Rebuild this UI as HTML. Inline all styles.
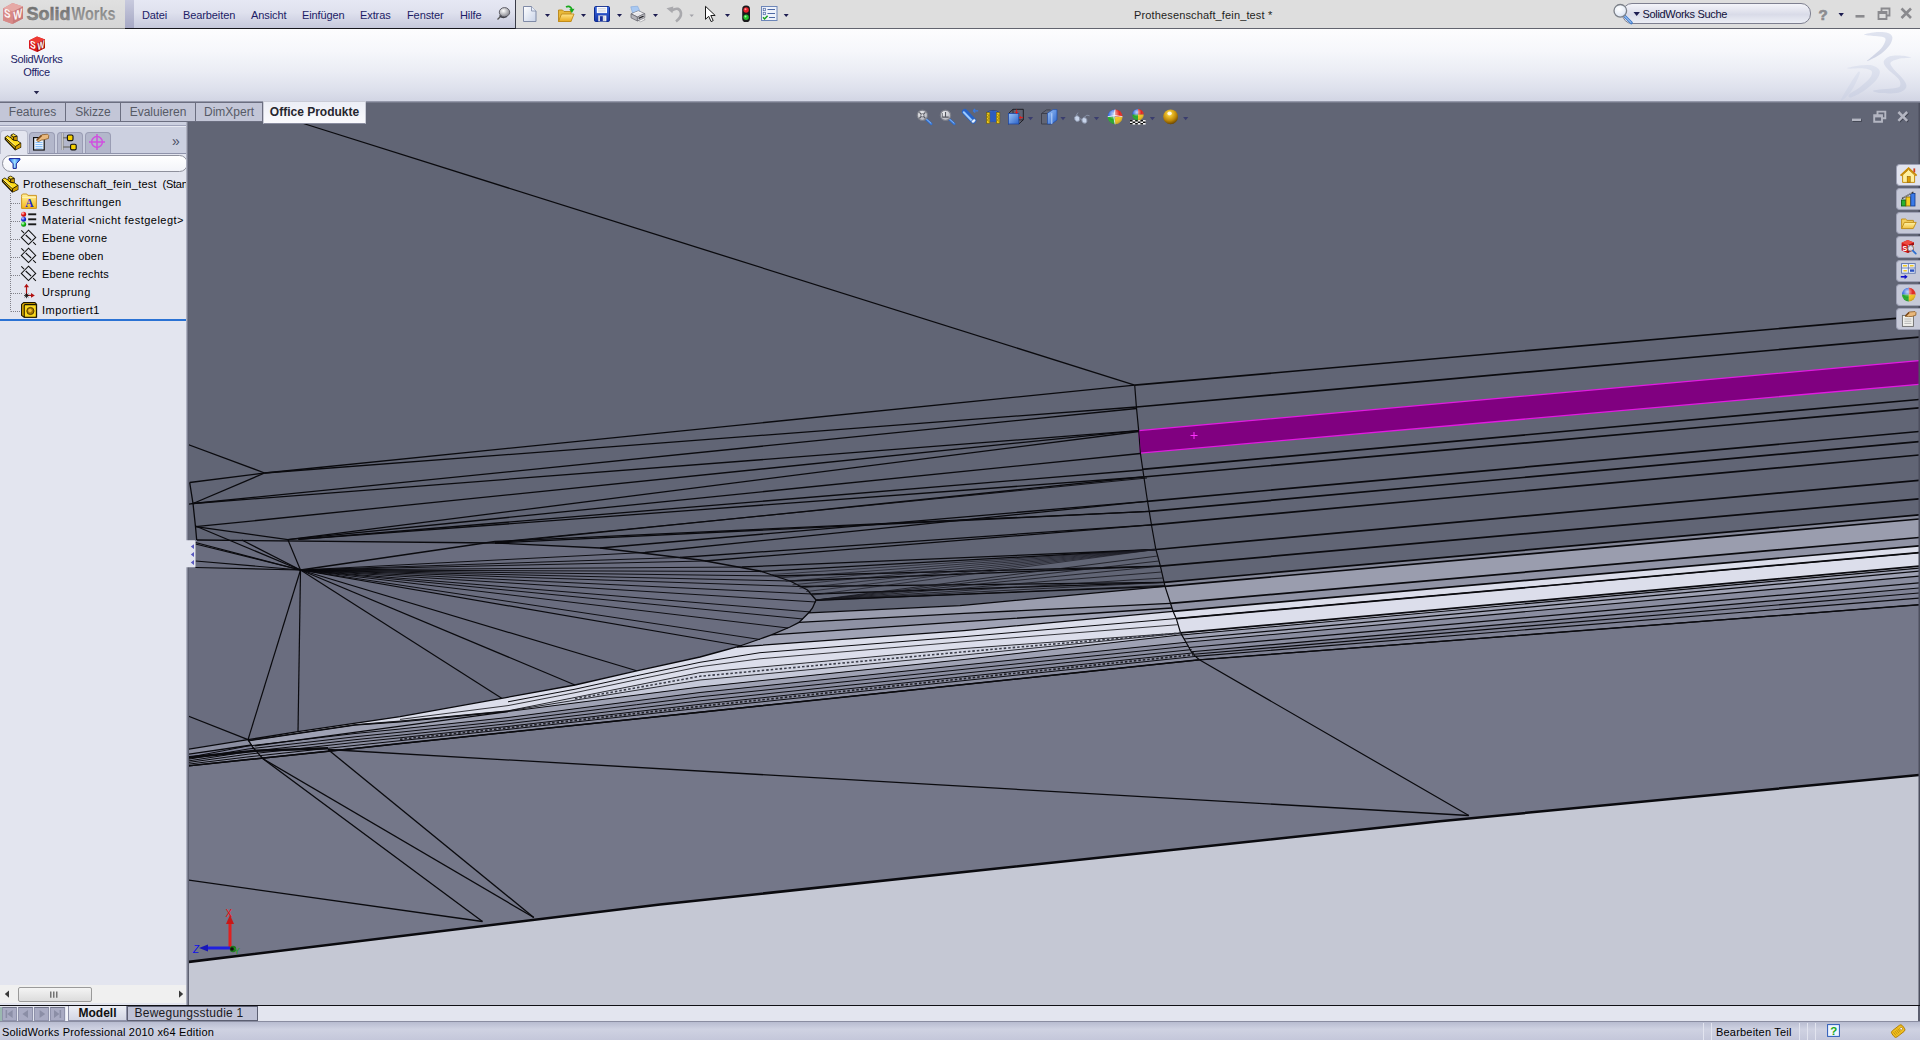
<!DOCTYPE html><html><head><meta charset="utf-8"><title>SolidWorks</title><style>
*{box-sizing:border-box;margin:0;padding:0}
html,body{width:1920px;height:1040px;overflow:hidden;background:#e3e5ef;font-family:"Liberation Sans",sans-serif;font-size:11px;color:#1b1b5e}
.abs{position:absolute}
#title{left:0;top:0;width:1920px;height:28px;background:#dedede}
#titleline{left:0;top:28px;width:1920px;height:1px;background:#62646f}
#logo{left:0;top:0;width:125px;height:28px;background:linear-gradient(#e0e0e0,#d6d6d6)}
#logoline{left:0;top:28px;width:125px;height:1px;background:#808080}
#menu{left:125px;top:0;width:391px;height:29px;background:linear-gradient(#e6e8f4 0%,#dfe1ee 45%,#c6c9dc 100%);border-bottom:1px solid #16161c;border-right:1px solid #3a3c48}
#menu .stripe{left:0;top:0;width:9px;height:28px;background:linear-gradient(#c8cade,#a6a8c4)}
.mi{position:absolute;top:9px;font-size:11px;color:#1c1c66;white-space:nowrap;letter-spacing:-0.1px}
#cmd{left:0;top:29px;width:1920px;height:73px;background:linear-gradient(#fdfdfe 0%,#f6f7fb 30%,#eaecf4 60%,#dcdfeb 85%,#d1d4e3 100%)}
#cmdline{left:0;top:101px;width:1920px;height:2px;background:linear-gradient(#a4a7ba,#666a7b)}
.tab{position:absolute;top:102px;height:20px;background:#c3c6d7;border:1px solid #6b6e80;border-left:none;font-size:12px;color:#565a66;text-align:center;line-height:18px;font-family:"Liberation Sans",sans-serif}
#tabact{left:263px;top:101px;width:103px;height:23px;background:linear-gradient(#eceef6,#fafafd);border:1px solid #c9cbd6;border-bottom:1px solid #8a8da0;font-weight:bold;color:#26262e;font-size:12px;line-height:20px;text-align:center;position:absolute}
#panel{left:0;top:122px;width:186px;height:883px;background:#e3e5ef}
#panelhead{left:0;top:122px;width:186px;height:33px;background:#ccd0e0}
#pvline{left:186px;top:122px;width:3px;height:884px;background:linear-gradient(90deg,#c9ccda 0%,#8a8d9e 40%,#5c5f70 85%)}
.ptab{position:absolute;top:132px;height:21px;width:26px;background:#b3b7cb;border:1px solid #9a9db4;border-bottom:none;border-radius:4px 4px 0 0}
#filter{left:2px;top:155px;width:186px;height:17px;border:1px solid #8e909c;border-radius:9px;background:linear-gradient(#ffffff,#f3f4f9)}
.tr{position:absolute;left:42px;font-size:11px;color:#000;white-space:nowrap;font-family:"Liberation Sans",sans-serif;letter-spacing:0.15px}
#blue{left:0;top:319px;width:186px;height:2px;background:#2a72d4}
#hscroll{left:0;top:985px;width:186px;height:18px;background:#f0f0f0}
#thumb{left:18px;top:987px;width:74px;height:15px;border:1px solid #9a9a9a;border-radius:2px;background:linear-gradient(#f4f4f4,#dcdcdc)}
#vbottom{left:0;top:1005px;width:1920px;height:1px;background:#101014}
#btabs{left:0;top:1006px;width:1920px;height:16px;background:#e3e5ef}
#status{left:0;top:1022px;width:1920px;height:18px;background:linear-gradient(#b8bcd0,#cfd2e2 40%,#c4c7da)}
#status .t{position:absolute;top:4px;font-size:11px;color:#000;white-space:nowrap;font-family:"Liberation Sans",sans-serif;letter-spacing:0.2px}
#search{left:1622px;top:3px;width:189px;height:21px;border:1px solid #7e8090;border-radius:10px;background:linear-gradient(#f4f5fa,#d9dbe8 55%,#eceef5)}
.rt{position:absolute;left:1896px;width:24px;height:23px;background:#c6c9d8;border:1px solid #9da0b4;border-right:none;border-radius:4px 0 0 4px}
</style></head><body>
<svg class="abs" style="left:0;top:0" width="1920" height="1040" viewBox="0 0 1920 1040"><defs><clipPath id="vp"><rect x="189" y="103" width="1730" height="902"/></clipPath></defs><rect x="186" y="101" width="1734" height="905" fill="#616575"/><g clip-path="url(#vp)">
<polygon points="188.0,962.0 660.0,904.5 1148.0,852.5 1440.0,821.2 1920.0,774.9 1920.0,1006.0 188.0,1006.0" fill="#c5c8d4"/>
<polygon points="188.0,765.9 1199.4,659.8 1920.0,604.7 1920.0,774.9 1440.0,821.2 1148.0,852.5 660.0,904.5 188.0,962.0" fill="#747789"/>
<polygon points="188.0,540.0 197.0,540.0 495.0,543.0 600.0,548.0 700.0,560.0 760.0,571.0 790.0,581.0 807.5,590.0 816.0,600.0 812.5,608.0 808.7,612.8 799.0,622.4 790.0,627.0 771.5,634.8 760.0,639.0 737.0,647.0 720.0,651.5 700.0,657.0 636.7,670.8 575.0,685.0 501.7,698.3 400.0,716.7 298.0,731.7 248.0,739.7 188.0,716.0" fill="#6a6d7f"/>
<polygon points="188.0,716.0 248.0,739.7 188.0,749.2" fill="#6a6d7f"/>
<polygon points="1164.0,582.4 1920.0,514.8 1920.0,518.9 1165.0,586.4" fill="#858899"/>
<polygon points="1165.0,586.4 1920.0,518.9 1920.0,537.4 1170.5,603.3" fill="#9a9dae"/>
<polygon points="1170.5,603.3 1920.0,537.4 1920.0,545.8 1173.0,611.3" fill="#9093a5"/>
<polygon points="808.7,612.8 960.0,605.6 1165.0,586.4 1170.5,603.3 964.0,613.4 799.0,622.4" fill="#9a9dae"/>
<polygon points="799.0,622.4 964.0,613.4 1170.5,603.3 1172.0,608.0 964.0,621.7 771.5,634.8 790.0,627.0" fill="#8e91a3"/>
<polygon points="771.5,634.8 964.0,621.7 1172.0,608.0 1173.0,611.3 964.0,630.6 737.0,647.0 760.0,639.0" fill="#a0a3b5"/>
<polygon points="248.0,739.7 298.0,731.7 400.0,716.7 501.7,698.3 575.0,685.0 636.7,670.8 700.0,657.0 720.0,651.5 737.0,647.0 964.0,630.6 1173.0,611.3 1920.0,545.8 1920.0,566.0 1180.6,632.9 964.0,648.5 700.0,672.6 508.0,710.8 400.0,721.0 355.0,724.6 248.0,740.3" fill="#dcdeeb"/>
<polygon points="248.0,740.3 355.0,724.6 400.0,721.0 508.0,710.8 700.0,672.6 964.0,648.5 1180.6,632.9 1920.0,566.0 1920.0,566.5 1180.8,633.3 964.0,655.0 700.0,680.0 508.0,711.0 400.0,721.4 355.0,724.9 248.0,740.6" fill="#d2d5e3"/>
<polygon points="248.0,740.6 355.0,724.9 400.0,721.4 508.0,711.0 700.0,680.0 964.0,655.0 1180.8,633.3 1920.0,566.5 1920.0,568.0 1181.5,634.8 964.0,659.5 700.0,687.0 508.0,711.5 400.0,722.0 355.0,725.2 248.0,741.0" fill="#c6c9d9"/>
<polygon points="248.0,741.0 355.0,725.2 400.0,722.0 508.0,711.5 700.0,687.0 964.0,659.5 1181.5,634.8 1920.0,568.0 1920.0,576.0 1186.0,642.3 964.0,665.0 700.0,692.5 508.0,717.5 400.0,729.0 355.0,733.5 248.0,746.0 188.0,757.5" fill="#9fa2b4"/>
<polygon points="188.0,757.5 248.0,746.0 355.0,733.5 400.0,729.0 508.0,717.5 700.0,692.5 964.0,665.0 1186.0,642.3 1920.0,576.0 1920.0,604.7 1199.4,659.8 964.0,684.5 700.0,712.2 508.0,732.3 400.0,743.6 355.0,748.4 248.0,759.6 188.0,765.9" fill="#8a8da0"/>
<polygon points="1191.3,651.7 1920.0,587.9 1920.0,604.7 1199.4,659.8" fill="#7f8295"/>
<polygon points="188.0,749.2 248.0,739.7 252.0,745.0 188.0,754.2" fill="#8c8fa2"/>
<polygon points="188.0,754.2 252.0,745.0 256.0,750.8 188.0,758.0" fill="#80839a"/>
<polygon points="1138.7,430.6 1920.0,360.6 1920.0,384.2 1140.4,453.1" fill="#800080" stroke="#e21be2" stroke-width="1.3"/>
<path d="M1190.5 435.5h7M1194 432v7" stroke="#ff30ff" stroke-width="1" fill="none"/>
<line x1="295.5" y1="121.0" x2="1134.7" y2="385.1" stroke="#0a0a0e" stroke-width="1.3"/>
<line x1="1134.7" y1="385.1" x2="1920.0" y2="316.2" stroke="#0a0a0e" stroke-width="1.7"/>
<line x1="1136.4" y1="407.0" x2="1920.0" y2="337.0" stroke="#0a0a0e" stroke-width="1.7"/>
<line x1="1142.0" y1="469.3" x2="1920.0" y2="399.4" stroke="#0a0a0e" stroke-width="1.7"/>
<line x1="1143.0" y1="477.0" x2="1920.0" y2="407.8" stroke="#0a0a0e" stroke-width="1.7"/>
<line x1="1147.0" y1="501.3" x2="1920.0" y2="431.4" stroke="#0a0a0e" stroke-width="1.7"/>
<line x1="1149.5" y1="511.4" x2="1920.0" y2="441.5" stroke="#0a0a0e" stroke-width="1.7"/>
<line x1="1151.5" y1="524.8" x2="1920.0" y2="454.9" stroke="#0a0a0e" stroke-width="1.7"/>
<line x1="1156.0" y1="549.5" x2="1920.0" y2="480.2" stroke="#0a0a0e" stroke-width="1.7"/>
<line x1="1160.4" y1="566.2" x2="1920.0" y2="498.7" stroke="#0a0a0e" stroke-width="1.7"/>
<line x1="1164.0" y1="582.4" x2="1920.0" y2="514.8" stroke="#0a0a0e" stroke-width="1.7"/>
<line x1="1165.0" y1="586.4" x2="1920.0" y2="518.9" stroke="#0a0a0e" stroke-width="1.7"/>
<line x1="1170.5" y1="603.3" x2="1920.0" y2="537.4" stroke="#0a0a0e" stroke-width="1.7"/>
<line x1="1173.0" y1="611.3" x2="1920.0" y2="545.8" stroke="#0a0a0e" stroke-width="1.7"/>
<line x1="1176.3" y1="618.7" x2="1920.0" y2="552.5" stroke="#0a0a0e" stroke-width="1.7"/>
<line x1="1180.6" y1="632.9" x2="1920.0" y2="566.0" stroke="#0a0a0e" stroke-width="1.7"/>
<line x1="1181.5" y1="635.0" x2="1920.0" y2="568.0" stroke="#0a0a0e" stroke-width="1.15"/>
<line x1="1184.0" y1="639.0" x2="1920.0" y2="571.0" stroke="#0a0a0e" stroke-width="1.15"/>
<line x1="1186.0" y1="642.3" x2="1920.0" y2="576.0" stroke="#0a0a0e" stroke-width="1.15"/>
<line x1="1189.0" y1="647.5" x2="1920.0" y2="582.8" stroke="#0a0a0e" stroke-width="1.15"/>
<line x1="1191.3" y1="651.7" x2="1920.0" y2="587.9" stroke="#0a0a0e" stroke-width="1.15"/>
<line x1="1193.5" y1="654.3" x2="1920.0" y2="592.9" stroke="#0a0a0e" stroke-width="1.15"/>
<line x1="1195.4" y1="656.4" x2="1920.0" y2="598.0" stroke="#0a0a0e" stroke-width="1.15"/>
<line x1="1199.4" y1="659.8" x2="1920.0" y2="604.7" stroke="#0a0a0e" stroke-width="1.15"/>
<polyline points="1134.7,385.1 1136.4,407.0 1138.7,430.6 1140.4,453.1 1143.0,471.0 1147.0,498.0 1152.0,528.0 1155.7,548.7 1160.4,566.2 1165.0,586.4 1170.5,603.3 1173.0,611.3 1176.3,618.7 1180.6,632.9 1186.0,642.3 1191.3,651.7 1195.4,656.4 1199.4,659.8 1468.8,815.5" fill="none" stroke="#0a0a0e" stroke-width="1.2"/>
<polyline points="188.0,962.0 660.0,904.5 1148.0,852.5 1440.0,821.2 1920.0,774.9" fill="none" stroke="#0a0a0e" stroke-width="2.5"/>
<line x1="188.0" y1="444.5" x2="264.7" y2="473.0" stroke="#0a0a0e" stroke-width="1.3"/>
<line x1="189.7" y1="482.5" x2="264.7" y2="473.0" stroke="#0a0a0e" stroke-width="1.3"/>
<line x1="193.0" y1="503.5" x2="264.7" y2="473.0" stroke="#0a0a0e" stroke-width="1.3"/>
<polyline points="189.7,482.5 193.0,503.5 195.5,526.7 196.7,540.0" fill="none" stroke="#0a0a0e" stroke-width="1.3"/>
<line x1="188.0" y1="504.3" x2="193.0" y2="503.5" stroke="#0a0a0e" stroke-width="1.3"/>
<line x1="264.7" y1="473.0" x2="1134.7" y2="385.1" stroke="#0a0a0e" stroke-width="1.3"/>
<line x1="264.7" y1="473.0" x2="1136.4" y2="407.0" stroke="#0a0a0e" stroke-width="1.3"/>
<line x1="193.0" y1="503.5" x2="1136.5" y2="408.5" stroke="#0a0a0e" stroke-width="1.3"/>
<line x1="193.0" y1="503.5" x2="1138.7" y2="430.6" stroke="#0a0a0e" stroke-width="1.3"/>
<line x1="195.5" y1="526.7" x2="1138.7" y2="430.6" stroke="#0a0a0e" stroke-width="1.3"/>
<line x1="195.5" y1="526.7" x2="288.0" y2="539.7" stroke="#0a0a0e" stroke-width="1.3"/>
<line x1="288.0" y1="539.7" x2="1138.7" y2="431.5" stroke="#0a0a0e" stroke-width="1.3"/>
<line x1="288.0" y1="539.7" x2="1140.4" y2="453.5" stroke="#0a0a0e" stroke-width="1.3"/>
<line x1="298.4" y1="539.4" x2="1142.0" y2="470.0" stroke="#0a0a0e" stroke-width="1.3"/>
<line x1="298.4" y1="539.4" x2="1143.0" y2="477.0" stroke="#0a0a0e" stroke-width="1.3"/>
<line x1="497.0" y1="542.0" x2="1147.0" y2="478.0" stroke="#0a0a0e" stroke-width="0.9"/>
<line x1="300.5" y1="570.0" x2="501.7" y2="698.3" stroke="#0a0a0e" stroke-width="1.2"/>
<line x1="300.5" y1="570.0" x2="575.0" y2="685.0" stroke="#0a0a0e" stroke-width="1.2"/>
<line x1="300.5" y1="570.0" x2="636.7" y2="670.8" stroke="#0a0a0e" stroke-width="1.2"/>
<line x1="300.5" y1="570.0" x2="742.0" y2="646.0" stroke="#0a0a0e" stroke-width="1.2"/>
<line x1="300.5" y1="570.0" x2="760.0" y2="639.5" stroke="#0a0a0e" stroke-width="0.95"/>
<line x1="300.5" y1="570.0" x2="788.0" y2="628.0" stroke="#0a0a0e" stroke-width="0.95"/>
<line x1="300.5" y1="570.0" x2="803.0" y2="619.0" stroke="#0a0a0e" stroke-width="0.95"/>
<line x1="300.5" y1="570.0" x2="811.0" y2="612.0" stroke="#0a0a0e" stroke-width="0.95"/>
<line x1="300.5" y1="570.0" x2="816.0" y2="602.0" stroke="#0a0a0e" stroke-width="0.95"/>
<line x1="300.5" y1="570.0" x2="812.0" y2="594.0" stroke="#0a0a0e" stroke-width="0.95"/>
<line x1="300.5" y1="570.0" x2="800.0" y2="586.5" stroke="#0a0a0e" stroke-width="0.95"/>
<line x1="300.5" y1="570.0" x2="790.0" y2="581.0" stroke="#0a0a0e" stroke-width="0.95"/>
<line x1="300.5" y1="570.0" x2="775.0" y2="576.0" stroke="#0a0a0e" stroke-width="0.95"/>
<line x1="300.5" y1="570.0" x2="760.0" y2="571.5" stroke="#0a0a0e" stroke-width="0.95"/>
<line x1="300.5" y1="570.0" x2="742.0" y2="567.0" stroke="#0a0a0e" stroke-width="0.95"/>
<line x1="300.5" y1="570.0" x2="705.0" y2="561.0" stroke="#0a0a0e" stroke-width="0.95"/>
<line x1="300.5" y1="570.0" x2="680.0" y2="557.5" stroke="#0a0a0e" stroke-width="0.95"/>
<line x1="300.5" y1="570.0" x2="645.0" y2="552.5" stroke="#0a0a0e" stroke-width="0.95"/>
<line x1="300.5" y1="570.0" x2="298.0" y2="731.7" stroke="#0a0a0e" stroke-width="1.2"/>
<line x1="300.5" y1="570.0" x2="248.0" y2="739.7" stroke="#0a0a0e" stroke-width="1.2"/>
<line x1="300.5" y1="570.0" x2="288.0" y2="540.0" stroke="#0a0a0e" stroke-width="1.2"/>
<line x1="300.5" y1="570.0" x2="241.8" y2="540.0" stroke="#0a0a0e" stroke-width="1.2"/>
<line x1="300.5" y1="570.0" x2="195.5" y2="526.0" stroke="#0a0a0e" stroke-width="1.2"/>
<line x1="300.5" y1="570.0" x2="195.5" y2="542.5" stroke="#0a0a0e" stroke-width="1.2"/>
<line x1="300.5" y1="570.0" x2="195.5" y2="544.0" stroke="#0a0a0e" stroke-width="1.2"/>
<line x1="300.5" y1="570.0" x2="195.5" y2="561.0" stroke="#0a0a0e" stroke-width="1.2"/>
<line x1="300.5" y1="570.0" x2="195.5" y2="567.5" stroke="#0a0a0e" stroke-width="1.2"/>
<line x1="300.5" y1="570.0" x2="495.0" y2="541.5" stroke="#0a0a0e" stroke-width="1.3"/>
<line x1="495.0" y1="541.5" x2="1149.5" y2="511.4" stroke="#0a0a0e" stroke-width="1.3"/>
<polyline points="197.0,540.0 495.0,543.0 600.0,548.0 700.0,560.0 760.0,571.0 790.0,581.0 807.5,590.0 816.0,600.0" fill="none" stroke="#0a0a0e" stroke-width="1.3"/>
<polyline points="816.0,600.0 812.5,608.0 808.7,612.8 799.0,622.4 790.0,627.0 771.5,634.8 760.0,639.0 737.0,647.0 720.0,651.5 700.0,657.0 636.7,670.8 575.0,685.0 501.7,698.3 400.0,716.7 298.0,731.7 248.0,739.7" fill="none" stroke="#0a0a0e" stroke-width="1.3"/>
<line x1="188.0" y1="716.0" x2="248.0" y2="739.7" stroke="#0a0a0e" stroke-width="1.3"/>
<polyline points="248.0,739.7 253.0,747.5 263.0,758.8" fill="none" stroke="#0a0a0e" stroke-width="1.3"/>
<line x1="600.0" y1="548.0" x2="1147.0" y2="501.3" stroke="#0a0a0e" stroke-width="1.3"/>
<line x1="645.0" y1="552.5" x2="1147.0" y2="501.3" stroke="#0a0a0e" stroke-width="1.3"/>
<line x1="680.0" y1="557.5" x2="1151.5" y2="524.8" stroke="#0a0a0e" stroke-width="1.3"/>
<line x1="705.0" y1="561.0" x2="1151.5" y2="524.8" stroke="#0a0a0e" stroke-width="1.3"/>
<line x1="742.0" y1="567.0" x2="1156.0" y2="549.5" stroke="#0a0a0e" stroke-width="1.3"/>
<line x1="760.0" y1="571.5" x2="1156.0" y2="549.5" stroke="#0a0a0e" stroke-width="1.3"/>
<line x1="775.0" y1="576.0" x2="1160.4" y2="566.2" stroke="#0a0a0e" stroke-width="1.3"/>
<line x1="790.0" y1="581.0" x2="1160.4" y2="566.2" stroke="#0a0a0e" stroke-width="1.3"/>
<line x1="800.0" y1="586.5" x2="1164.0" y2="582.4" stroke="#0a0a0e" stroke-width="1.3"/>
<line x1="812.0" y1="594.0" x2="1164.0" y2="582.4" stroke="#0a0a0e" stroke-width="1.3"/>
<line x1="816.0" y1="600.0" x2="1165.0" y2="586.4" stroke="#0a0a0e" stroke-width="1.3"/>
<line x1="495.0" y1="543.0" x2="1143.0" y2="477.0" stroke="#0a0a0e" stroke-width="1.3"/>
<line x1="495.0" y1="543.0" x2="1149.5" y2="511.4" stroke="#0a0a0e" stroke-width="1.3"/>
<line x1="772.0" y1="574.5" x2="1156.0" y2="549.5" stroke="#1a1a22" stroke-width="0.7"/>
<line x1="778.8" y1="577.9" x2="1156.0" y2="549.5" stroke="#1a1a22" stroke-width="0.7"/>
<line x1="785.7" y1="581.3" x2="1156.0" y2="549.5" stroke="#1a1a22" stroke-width="0.7"/>
<line x1="792.5" y1="584.8" x2="1156.0" y2="549.5" stroke="#1a1a22" stroke-width="0.7"/>
<line x1="799.3" y1="588.2" x2="1156.0" y2="549.5" stroke="#1a1a22" stroke-width="0.7"/>
<line x1="806.2" y1="591.6" x2="1156.0" y2="549.5" stroke="#1a1a22" stroke-width="0.7"/>
<line x1="813.0" y1="595.0" x2="1156.0" y2="549.5" stroke="#1a1a22" stroke-width="0.7"/>
<line x1="816.0" y1="600.0" x2="1157.7" y2="556.0" stroke="#15151c" stroke-width="0.8"/>
<line x1="816.0" y1="600.0" x2="1159.0" y2="561.0" stroke="#15151c" stroke-width="0.8"/>
<line x1="816.0" y1="600.0" x2="1160.4" y2="566.2" stroke="#15151c" stroke-width="0.8"/>
<line x1="816.0" y1="600.0" x2="1161.7" y2="572.0" stroke="#15151c" stroke-width="0.8"/>
<line x1="816.0" y1="600.0" x2="1163.1" y2="578.0" stroke="#15151c" stroke-width="0.8"/>
<line x1="816.0" y1="600.0" x2="1164.1" y2="582.4" stroke="#15151c" stroke-width="0.8"/>
<line x1="816.0" y1="600.6" x2="1165.0" y2="585.4" stroke="#0a0a0e" stroke-width="0.8"/>
<polyline points="808.7,612.8 960.0,605.6 1165.0,586.4" fill="none" stroke="#0a0a0e" stroke-width="1.3"/>
<polyline points="799.0,622.4 964.0,613.4 1170.5,603.3" fill="none" stroke="#0a0a0e" stroke-width="1.3"/>
<polyline points="771.5,634.8 964.0,621.7 1172.0,608.0" fill="none" stroke="#0a0a0e" stroke-width="1.3"/>
<polyline points="737.0,647.0 964.0,630.6 1173.0,611.3" fill="none" stroke="#0a0a0e" stroke-width="1.3"/>
<polyline points="248.0,740.3 355.0,724.6 400.0,721.0 508.0,710.8 700.0,672.6 964.0,648.5 1180.6,632.9" fill="none" stroke="#0a0a0e" stroke-width="0.8"/>
<polyline points="248.0,740.6 355.0,724.9 400.0,721.4 508.0,711.0 700.0,680.0 964.0,655.0 1180.8,633.3" fill="none" stroke="#0a0a0e" stroke-width="0.8"/>
<polyline points="248.0,741.0 355.0,725.2 400.0,722.0 508.0,711.5 700.0,687.0 964.0,659.5 1181.5,634.8" fill="none" stroke="#0a0a0e" stroke-width="1.0"/>
<polyline points="188.0,757.5 248.0,746.0 355.0,733.5 400.0,729.0 508.0,717.5 700.0,692.5 964.0,665.0 1186.0,642.3" fill="none" stroke="#0a0a0e" stroke-width="1.0"/>
<polyline points="188.0,765.9 248.0,759.6 355.0,748.4 400.0,743.6 508.0,732.3 700.0,712.2 964.0,684.5 1199.4,659.8" fill="none" stroke="#0a0a0e" stroke-width="1.5"/>
<polyline points="508.0,701.8 575.0,689.2 636.7,675.7 700.0,662.3 760.0,652.7 964.0,636.7 1175.6,618.6 1920.0,552.7" fill="none" stroke="#0a0a0e" stroke-width="1.0"/>
<polyline points="400.0,719.4 508.0,705.6 575.0,692.7 636.7,679.7 700.0,666.7 760.0,658.8 964.0,641.7 1177.7,624.7" fill="none" stroke="#0a0a0e" stroke-width="0.8"/>
<polyline points="575.0,698.8 636.7,687.7 700.0,676.3 760.0,670.7 964.0,651.8 1180.7,633.1" fill="none" stroke="#3a3c48" stroke-width="1.6" stroke-dasharray="2.5 2"/>
<polyline points="188.0,759.3 248.0,749.0 300.0,743.1 355.0,736.8 400.0,732.2 508.0,720.8 575.0,712.4 636.7,704.7 700.0,696.8 760.0,690.6 964.0,669.3 1188.9,646.1" fill="none" stroke="#0a0a0e" stroke-width="1.0"/>
<polyline points="188.0,761.0 248.0,751.7 300.0,745.9 355.0,739.7 400.0,735.2 508.0,723.7 575.0,715.7 636.7,708.3 700.0,700.8 760.0,694.5 964.0,673.2 1191.6,649.6" fill="none" stroke="#0a0a0e" stroke-width="1.0"/>
<polyline points="188.0,762.5 248.0,754.2 300.0,748.5 355.0,742.4 400.0,737.8 508.0,726.4 575.0,718.7 636.7,711.6 700.0,704.3 760.0,698.0 964.0,676.7 1194.0,652.8" fill="none" stroke="#0a0a0e" stroke-width="1.0"/>
<polyline points="188.0,764.2 248.0,756.9 300.0,751.3 355.0,745.4 400.0,740.7 508.0,729.4 575.0,722.0 636.7,715.2 700.0,708.2 760.0,702.0 964.0,680.6 1196.7,656.3" fill="none" stroke="#0a0a0e" stroke-width="1.0"/>
<polyline points="400.0,739.3 508.0,727.9 575.0,720.3 636.7,713.4 700.0,706.3 760.0,700.0 964.0,678.6 1195.4,654.5" fill="none" stroke="#22222a" stroke-width="1.7" stroke-dasharray="2.5 2"/>
<line x1="188.0" y1="749.2" x2="248.0" y2="739.7" stroke="#0a0a0e" stroke-width="1.3"/>
<line x1="188.0" y1="754.2" x2="252.0" y2="745.0" stroke="#0a0a0e" stroke-width="1.3"/>
<line x1="254.7" y1="745.8" x2="508.0" y2="711.7" stroke="#0a0a0e" stroke-width="1.3"/>
<polyline points="188.0,757.5 256.0,750.8 328.0,748.3" fill="none" stroke="#0a0a0e" stroke-width="2.6"/>
<polyline points="188.0,765.9 1199.4,659.8 1920.0,604.7" fill="none" stroke="#0a0a0e" stroke-width="1.3"/>
<line x1="263.0" y1="758.8" x2="482.5" y2="921.5" stroke="#0a0a0e" stroke-width="1.3"/>
<line x1="263.0" y1="758.8" x2="533.8" y2="917.5" stroke="#0a0a0e" stroke-width="1.3"/>
<line x1="328.0" y1="749.5" x2="533.8" y2="917.5" stroke="#0a0a0e" stroke-width="1.3"/>
<line x1="328.0" y1="749.5" x2="1468.8" y2="815.5" stroke="#0a0a0e" stroke-width="1.3"/>
<line x1="188.0" y1="880.0" x2="482.5" y2="921.5" stroke="#0a0a0e" stroke-width="1.3"/>
<g><path d="M230 947V922" stroke="#e02020" stroke-width="3"/><path d="M226 924l4-9 4 9z" fill="#c81818"/><path d="M230 948H206" stroke="#2020e0" stroke-width="3"/><path d="M208 944.5l-9 3.5 9 3.5z" fill="#1818b8"/><circle cx="233" cy="949" r="3.2" fill="#1e7a1e"/><circle cx="232" cy="949" r="1.8" fill="#111"/><text x="225.5" y="917" font-family="Liberation Sans,sans-serif" font-size="10" fill="#e81010">X</text><text x="193" y="953" font-family="Liberation Sans,sans-serif" font-size="10" font-style="italic" fill="#1010e8">Z</text><text x="234" y="954" font-family="Liberation Sans,sans-serif" font-size="9" fill="#20a020">Y</text></g>
</g><rect x="1918.5" y="103" width="1.5" height="902" fill="#4c4f5e"/>
<defs>
<radialGradient id="glens" cx="0.4" cy="0.35" r="0.8"><stop offset="0" stop-color="#f4f4f6"/><stop offset="1" stop-color="#9a9ca6"/></radialGradient>
<linearGradient id="gcube" x1="0" y1="0" x2="1" y2="1"><stop offset="0" stop-color="#9cc4f8"/><stop offset="1" stop-color="#2a62c8"/></linearGradient>
<radialGradient id="ggold" cx="0.42" cy="0.3" r="0.75"><stop offset="0" stop-color="#fff6c8"/><stop offset="0.22" stop-color="#f0c430"/><stop offset="0.62" stop-color="#bf8808"/><stop offset="1" stop-color="#5e3c00"/></radialGradient>
<radialGradient id="gshade" cx="0.4" cy="0.3" r="0.8"><stop offset="0" stop-color="#fff" stop-opacity="0.75"/><stop offset="0.5" stop-color="#fff" stop-opacity="0"/><stop offset="1" stop-color="#000" stop-opacity="0.35"/></radialGradient>
<clipPath id="cb1"><circle cx="1115.1" cy="116.8" r="7.4"/></clipPath>
<clipPath id="cb2"><circle cx="1138" cy="114.6" r="5.7"/></clipPath>
</defs>
<path d="M925.8 118.89999999999999l5.4 5" stroke="#2f6fd0" stroke-width="2.6" stroke-linecap="round"/><path d="M926.0 118.7l5 4.6" stroke="#9cc8ff" stroke-width="0.9" stroke-linecap="round"/><circle cx="922.4" cy="115.3" r="5.2" fill="url(#glens)" stroke="#7c7e88" stroke-width="1.1"/><path d="M919.4 112.3l1.8 1.8M925.4 112.3l-1.8 1.8M919.4 118.3l1.8-1.8M925.4 118.3l-1.8-1.8" stroke="#55575f" stroke-width="1.2"/><circle cx="922.4" cy="115.3" r="1.6" fill="none" stroke="#55575f" stroke-width="0.8"/>
<path d="M948.9 118.89999999999999l5.4 5" stroke="#2f6fd0" stroke-width="2.6" stroke-linecap="round"/><path d="M949.1 118.7l5 4.6" stroke="#9cc8ff" stroke-width="0.9" stroke-linecap="round"/><circle cx="945.5" cy="115.3" r="5.2" fill="url(#glens)" stroke="#7c7e88" stroke-width="1.1"/><path d="M942.3 117.2h6.4M945.5 112v5" stroke="#55575f" stroke-width="1.2"/><path d="M942.3 113v4.2" stroke="#55575f" stroke-width="0.8"/>
<path d="M964.8 111.8l8.6 9" stroke="#2763c8" stroke-width="5.6" stroke-linecap="round"/><path d="M963.8 112.2l8.2 8.6" stroke="#9ccaff" stroke-width="2" stroke-linecap="round"/><ellipse cx="973.6" cy="121" rx="2.6" ry="1.7" transform="rotate(-44 973.6 121)" fill="#e8f2ff" stroke="#2258b0" stroke-width="0.7"/><path d="M973.2 110.8h5M973.2 110.8l2-1.8M973.2 110.8l2 1.8" stroke="#3a7ae0" stroke-width="1.2" fill="none"/>
<path d="M986.6 112.5q6.5-4 13 0v10.5q-6.5-4-13 0z" fill="#5a8ee0" stroke="#1c3c88" stroke-width="0.8"/><path d="M990 111.6q3.2-1.2 6.4 0v10.4q-3.2-1.2-6.4 0z" fill="#2d5cc0"/><rect x="986.6" y="112.6" width="3.2" height="10.6" fill="#f2cc18" stroke="#7a6200" stroke-width="0.6"/><rect x="996.6" y="112.6" width="3.2" height="10.6" fill="#f2cc18" stroke="#7a6200" stroke-width="0.6"/><path d="M987.2 114l2 1.5-2 1.5 2 1.5-2 1.5 2 1.5M997.2 114l2 1.5-2 1.5 2 1.5-2 1.5 2 1.5" stroke="#6a5200" stroke-width="0.6" fill="none"/>
<path d="M1008.5 113.5l4.5-4.2h10.3v10.5l-4.5 4.2" fill="none" stroke="#17171c" stroke-width="0.9"/><path d="M1013 109.3v10.6h10.3M1013 119.9l-4.5 4.2" stroke="#17171c" stroke-width="0.7" fill="none"/><rect x="1008.5" y="113.5" width="10.3" height="10.5" fill="url(#gcube)" stroke="#1e4aa6" stroke-width="0.8"/><path d="M1016.6 109.6v3.6M1015.2 111.8l1.4 1.6 1.4-1.6M1023 117.6h-3.6M1020.8 116.2l-1.6 1.4 1.6 1.4" stroke="#e81818" stroke-width="1" fill="none"/>
<path d="M1027.9 117.0h5.2l-2.6 3.2z" fill="#3a3d6e"/>
<path d="M1041.5 113.5h9v10.5h-9zM1041.5 113.5l5-3.6h4" fill="none" stroke="#3a3c48" stroke-width="0.9"/><path d="M1047.5 113.2l5.5-3.6h4v10.4l-5.2 4h-4.3z" fill="url(#gcube)" stroke="#1e4aa6" stroke-width="0.7"/><path d="M1051.8 113.2v10.8" stroke="#cfe2ff" stroke-width="0.8"/>
<path d="M1060.4 117.0h5.2l-2.6 3.2z" fill="#3a3d6e"/>
<g fill="#c8d4ea" stroke="#8a94aa" stroke-width="0.9"><ellipse cx="1077.2" cy="118.6" rx="2.5" ry="2.9" transform="rotate(-20 1077.2 118.6)"/><ellipse cx="1084.4" cy="120.4" rx="2.5" ry="2.9" transform="rotate(-20 1084.4 120.4)"/></g><path d="M1076 115.6l2-3M1084 117.4q3-3.6 5.6-1.6M1079.6 118.6l2.4 0.8" stroke="#8a94aa" stroke-width="0.9" fill="none"/>
<path d="M1093.9 117.0h5.2l-2.6 3.2z" fill="#3a3d6e"/>
<g clip-path="url(#cb1)"><rect x="1107" y="109" width="8.1" height="7.8" fill="#2a62e0"/><rect x="1115.1" y="109" width="8.1" height="7.8" fill="#e02820"/><rect x="1107" y="116.8" width="8.1" height="8" fill="#22a828"/><rect x="1115.1" y="116.8" width="8.1" height="8" fill="#f2c21c"/><path d="M1107 116.8q8-2.6 16.2 0M1115.1 109q-2.4 8 0 16" stroke="#f4f4f4" stroke-width="0.9" fill="none"/><circle cx="1115.1" cy="116.8" r="7.4" fill="url(#gshade)"/></g>
<g><path d="M1130 120h15.6v4.6h-15.6z" fill="#f4f4f4"/><path d="M1130 120h2.6v1.5h-2.6zM1135.2 120h2.6v1.5h-2.6zM1140.4 120h2.6v1.5h-2.6zM1132.6 121.5h2.6v1.5h-2.6zM1137.8 121.5h2.6v1.5h-2.6zM1143 121.5h2.6v1.5h-2.6zM1130 123h2.6v1.6h-2.6zM1135.2 123h2.6v1.6h-2.6zM1140.4 123h2.6v1.6h-2.6z" fill="#111"/></g><g clip-path="url(#cb2)"><rect x="1132" y="108.6" width="6" height="6" fill="#2a62e0"/><rect x="1138" y="108.6" width="6" height="6" fill="#e02820"/><rect x="1132" y="114.6" width="6" height="6" fill="#22a828"/><rect x="1138" y="114.6" width="6" height="6" fill="#f2c21c"/><circle cx="1138" cy="114.6" r="5.7" fill="url(#gshade)"/></g>
<path d="M1149.8000000000002 117.0h5.2l-2.6 3.2z" fill="#3a3d6e"/>
<circle cx="1170.6" cy="116.8" r="7.4" fill="url(#ggold)"/><ellipse cx="1169.6" cy="113.4" rx="2.2" ry="1.8" fill="#fffdf0" opacity="0.9"/>
<path d="M1183.1000000000001 117.0h5.2l-2.6 3.2z" fill="#3a3d6e"/>
<g stroke="#3e414e" fill="none" transform="translate(0.8 0.8)"><path d="M1852 119.8h9" stroke-width="2.4"/><path d="M1898.4 112l8.8 8.8M1907.2 112l-8.8 8.8" stroke-width="2.6"/></g><g stroke="#b4b6c2" fill="none"><path d="M1852 119.8h9" stroke-width="2.4"/><path d="M1877.5 111.6h7.8v6.6h-7.8z" stroke-width="1.9"/><path d="M1874.2 115.2h7.8v6.6h-7.8z" stroke-width="1.9" fill="#616575"/><path d="M1874 116.6h8.4" stroke-width="1.6"/><path d="M1898.4 112l8.8 8.8M1907.2 112l-8.8 8.8" stroke-width="2.6"/></g>
</svg>
<div id="title" class="abs"></div><div id="titleline" class="abs"></div><div id="logo" class="abs"></div><div id="logoline" class="abs"></div>
<svg class="abs" style="left:0;top:0" width="125" height="28" viewBox="0 0 125 28">
<defs><linearGradient id="lg1" x1="0" y1="0" x2="0" y2="1"><stop offset="0" stop-color="#666"/><stop offset="1" stop-color="#9a9a9a"/></linearGradient>
<linearGradient id="lg2" x1="0" y1="0" x2="0" y2="1"><stop offset="0" stop-color="#7c7c7c"/><stop offset="1" stop-color="#a4a4a4"/></linearGradient></defs>
<path d="M3 8.5 L12.5 3 L23 6.5 L23 18.5 L12.5 24 L3 20.5z" fill="#d98c8c"/>
<path d="M3 8.5 L12.5 3 L23 6.5 L13 11.5z" fill="#e6a9a6"/>
<path d="M13 11.5 L23 6.5 L23 18.5 L12.5 24z" fill="#c97a7a"/>
<path d="M3 8.5 L13 11.5 L12.5 24 L3 20.5z" fill="#d88a88"/>
<text x="4" y="16.6" font-family="Liberation Sans,sans-serif" font-weight="bold" font-size="11.8" fill="#fdf4f4" transform="skewY(15)" style="transform-origin:4px 16.6px" textLength="6.6" lengthAdjust="spacingAndGlyphs">S</text>
<text x="13.2" y="20.4" font-family="Liberation Sans,sans-serif" font-weight="bold" font-size="12.4" fill="#fdf4f4" transform="skewY(-22)" style="transform-origin:13.2px 20.4px" textLength="9" lengthAdjust="spacingAndGlyphs">W</text>
<text x="26.5" y="20" font-family="Liberation Sans,sans-serif" font-weight="bold" font-size="17.5" fill="url(#lg1)" stroke="#777" stroke-width="0.5" textLength="44" lengthAdjust="spacingAndGlyphs">Solid</text>
<text x="71.5" y="20" font-family="Liberation Sans,sans-serif" font-weight="bold" font-size="17.5" fill="url(#lg2)" textLength="44" lengthAdjust="spacingAndGlyphs">Works</text>
</svg>
<div id="menu" class="abs"><div class="stripe abs"></div>
<span class="mi" style="left:17px">Datei</span>
<span class="mi" style="left:58px">Bearbeiten</span>
<span class="mi" style="left:126px">Ansicht</span>
<span class="mi" style="left:177px">Einfügen</span>
<span class="mi" style="left:235px">Extras</span>
<span class="mi" style="left:282px">Fenster</span>
<span class="mi" style="left:335px">Hilfe</span>
</div>
<svg class="abs" style="left:490px;top:0" width="320" height="28" viewBox="490 0 320 28">
<defs>
<linearGradient id="gdoc" x1="0" y1="0" x2="1" y2="1"><stop offset="0" stop-color="#ffffff"/><stop offset="1" stop-color="#c9d3e8"/></linearGradient>
<linearGradient id="gfold" x1="0" y1="0" x2="0" y2="1"><stop offset="0" stop-color="#ffe58a"/><stop offset="1" stop-color="#e9a91c"/></linearGradient>
<linearGradient id="gsave" x1="0" y1="0" x2="0" y2="1"><stop offset="0" stop-color="#3b6ae0"/><stop offset="1" stop-color="#1434a8"/></linearGradient>
<radialGradient id="gpin" cx="0.4" cy="0.35" r="0.7"><stop offset="0" stop-color="#ffffff"/><stop offset="1" stop-color="#7d7d86"/></radialGradient>
</defs>
<path d="M497.5 19.5l4-4" stroke="#555" stroke-width="1.3"/><ellipse cx="504.5" cy="12.2" rx="5.2" ry="4.6" fill="url(#gpin)" stroke="#55555e" stroke-width="0.9"/><path d="M499.5 15.5q3 3.5 7.5 1" stroke="#44444c" stroke-width="1.2" fill="none"/>
<path d="M523.5 6.5h8l4.5 4.5v10.5h-12.5z" fill="url(#gdoc)" stroke="#7f8aa6" stroke-width="1"/><path d="M531.5 6.5v4.5h4.5" fill="#e8edf8" stroke="#7f8aa6" stroke-width="0.8"/>
<path d="M545 14h5l-2.5 3z" fill="#1c1c50"/>
<path d="M558.5 21.5v-11.5h4l1.5 1.5h7v10z" fill="#e8b93a" stroke="#b98515" stroke-width="0.9"/><path d="M558.5 21.5l3-7.5h12.5l-3 7.5z" fill="url(#gfold)" stroke="#c08a18" stroke-width="0.9"/><path d="M566 7q4-2 6 2.5" stroke="#17a81c" stroke-width="1.8" fill="none"/><path d="M569.3 9.2l5.2-0.4-2.6 4.2z" fill="#17a81c"/>
<path d="M581 14h5l-2.5 3z" fill="#1c1c50"/>
<rect x="594.5" y="6.5" width="15" height="15" rx="1.2" fill="url(#gsave)" stroke="#0e2a8c" stroke-width="1"/><rect x="596.8" y="6.9" width="10.2" height="6.2" fill="#fbfcff"/><path d="M598 8.6h7.8M598 10.2h7.8M598 11.8h7.8" stroke="#b4b8c4" stroke-width="0.55"/><rect x="598.2" y="15.4" width="8.2" height="6" fill="#d4d6e0"/><rect x="600" y="16.2" width="2.8" height="4.8" fill="#162e9a"/><path d="M604.6 16.4l1 0v4.4" stroke="#fff" stroke-width="0.7" fill="none"/>
<path d="M617 14h5l-2.5 3z" fill="#1c1c50"/>
<path d="M630.8 6.8l6.8-0.6 2.6 5.6-7.6 1.4z" fill="#a9c9f2" stroke="#7fa6dc" stroke-width="0.6"/><path d="M631 13.8l7.4-3 6.4 2.8-7.4 3.4z" fill="#e6e6ea" stroke="#707078" stroke-width="0.7"/><path d="M631 13.8l6.4 3.2v4l-6.4-3.2z" fill="#b4b4ba" stroke="#606068" stroke-width="0.7"/><path d="M637.4 17l7.4-3.4v4l-7.4 3.4z" fill="#cfcfd4" stroke="#606068" stroke-width="0.7"/><path d="M638.6 18.4l5-2.2" stroke="#26262a" stroke-width="1.3"/><path d="M638.8 20.6l4.6-2 1.8 1-4.6 2.2z" fill="#fafafa" stroke="#808088" stroke-width="0.5"/><path d="M633.4 13.6l4.8-1.8 3.4 1.4" stroke="#fff" stroke-width="0.8" fill="none"/>
<path d="M653 14h5l-2.5 3z" fill="#1c1c50"/>
<path d="M671.5 10.5q8-4.5 9.5 2.5q0.3 4.5-5 8.5" stroke="#a9a9ad" stroke-width="2.6" fill="none"/><path d="M666.5 8.2l6.8-1.6-0.9 6.6z" fill="#a9a9ad"/>
<path d="M689.5 14.5h4.4l-2.2 2.6z" fill="#a2a2a8"/>
<path d="M705.5 6.3v13l3.2-3 2.4 5.3 2.1-1-2.4-5.1h4.4z" fill="#ffffff" stroke="#1a1a1a" stroke-width="1"/>
<path d="M725 14h5l-2.5 3z" fill="#1c1c50"/>
<rect x="742.2" y="5.6" width="7.8" height="16.4" rx="3.6" fill="#19191b"/><circle cx="746.1" cy="10" r="2.7" fill="#e8202a"/><circle cx="745.5" cy="9.3" r="1" fill="#ff9a9a"/><circle cx="746.1" cy="17.3" r="2.7" fill="#22c02a"/><circle cx="745.5" cy="16.6" r="1" fill="#a6f5a6"/>
<rect x="761.5" y="6.5" width="15.5" height="14" fill="#eef2fb" stroke="#6d86b8" stroke-width="1"/><path d="M767.5 9.5h7.5M767.5 13.5h7.5M769 17.5h6" stroke="#4d69a4" stroke-width="1.1"/><rect x="763.2" y="8.3" width="2.4" height="2.4" fill="none" stroke="#4d69a4" stroke-width="0.7"/><rect x="763.2" y="12.3" width="2.4" height="2.4" fill="none" stroke="#4d69a4" stroke-width="0.7"/><path d="M763 17.3l1.6 1.7 3-3.2" stroke="#18a020" stroke-width="1.5" fill="none"/>
<path d="M783.7 14h5l-2.5 3z" fill="#1c1c50"/>
</svg>
<div class="abs" style="left:1134px;top:9px;font-size:11px;color:#1e1e22;white-space:nowrap;letter-spacing:0.14px">Prothesenschaft_fein_test *</div>
<div id="search" class="abs"></div><div class="abs" style="left:1642.5px;top:8px;font-size:11px;color:#10103a;white-space:nowrap;letter-spacing:-0.32px">SolidWorks Suche</div>
<svg class="abs" style="left:1600px;top:0" width="320" height="28" viewBox="1600 0 320 28">
<defs><radialGradient id="gmag" cx="0.4" cy="0.35" r="0.75"><stop offset="0" stop-color="#ffffff"/><stop offset="0.7" stop-color="#e4ebf6"/><stop offset="1" stop-color="#a9c0e0"/></radialGradient></defs>
<path d="M1624 15.5l7.3 7.3" stroke="#3d78c8" stroke-width="3" stroke-linecap="round"/><path d="M1624 15.5l7 7" stroke="#8fb8ec" stroke-width="1.2" stroke-linecap="round"/>
<circle cx="1620.3" cy="10.8" r="6.3" fill="url(#gmag)" stroke="#7c8088" stroke-width="1.3"/>
<path d="M1633.5 12h6.4l-3.2 4z" fill="#1c1c50"/>
<text x="1818.5" y="20" font-family="Liberation Sans,sans-serif" font-weight="bold" font-size="15" fill="#8c8c90" stroke="#8c8c90" stroke-width="0.7">?</text>
<path d="M1838.5 13h5.4l-2.7 3.4z" fill="#1c1c50"/>
<rect x="1855.5" y="15" width="9" height="2.6" fill="#8a8a8e"/>
<path d="M1881.5 8.5h8v7h-8z" fill="none" stroke="#8a8a8e" stroke-width="1.8"/><path d="M1878.5 12h8v7h-8z" fill="#dedede" stroke="#8a8a8e" stroke-width="1.8"/><path d="M1878 13.2h9" stroke="#8a8a8e" stroke-width="1.6"/>
<path d="M1901.5 8.5l9.5 9.5M1911 8.5l-9.5 9.5" stroke="#8a8a8e" stroke-width="2.6"/>
</svg>
<div id="cmd" class="abs"></div>
<svg class="abs" style="left:0;top:29px" width="1920" height="72" viewBox="0 29 1920 72">
<path d="M29 40.5 L37 36.4 L45 39.5 L45 48 L37 52 L29 48.5z" fill="#d81818"/>
<path d="M29 40.5 L37 36.4 L45 39.5 L37 43.5z" fill="#ee3a34"/>
<path d="M37 43.5 L45 39.5 L45 48 L37 52z" fill="#a80e0e"/>
<text x="30" y="47.6" font-family="Liberation Sans,sans-serif" font-weight="bold" font-size="10.4" fill="#fff" transform="skewY(17)" style="transform-origin:30px 47.6px" textLength="5.8" lengthAdjust="spacingAndGlyphs">S</text>
<text x="37.6" y="50.6" font-family="Liberation Sans,sans-serif" font-weight="bold" font-size="10.6" fill="#f4f4f4" transform="skewY(-24)" style="transform-origin:37.6px 50.6px" textLength="7" lengthAdjust="spacingAndGlyphs">W</text>
<path d="M33.8 91h5.4l-2.7 3.2z" fill="#26264e"/>
<defs><linearGradient id="gds" x1="0" y1="0" x2="0" y2="1"><stop offset="0" stop-color="#e0e4f0"/><stop offset="1" stop-color="#cdd2e3"/></linearGradient></defs><g fill="url(#gds)"><path d="M1864.2 34.7C1864.5 34.1 1872.8 32.4 1876.8 32.1C1880.7 31.8 1885.4 32.1 1888.0 33.0C1890.6 33.8 1892.1 35.3 1892.4 37.3C1892.6 39.3 1891.6 42.3 1889.8 45.1C1887.9 47.8 1884.9 51.1 1881.1 53.7C1877.4 56.4 1868.7 60.7 1867.3 61.1C1865.8 61.5 1870.1 58.4 1872.5 56.3C1874.8 54.2 1878.9 51.1 1881.1 48.5C1883.3 46.0 1885.0 42.6 1885.4 40.8C1885.9 38.9 1885.4 38.1 1883.7 37.3C1882.0 36.5 1878.3 36.4 1875.1 36.0C1871.8 35.6 1864.0 35.4 1864.2 34.7z"/><path d="M1848.7 67.6C1850.5 67.0 1855.5 65.8 1859.5 65.4C1863.4 65.1 1869.1 64.5 1872.5 65.4C1875.8 66.4 1879.2 68.5 1879.8 71.0C1880.4 73.6 1878.6 77.2 1875.9 80.6C1873.2 83.9 1868.0 88.1 1863.8 90.9C1859.6 93.7 1853.3 96.8 1850.8 97.4C1848.4 98.0 1847.7 96.1 1849.1 94.4C1850.5 92.7 1856.0 90.2 1859.5 87.5C1862.9 84.7 1867.8 80.7 1869.9 78.0C1871.9 75.2 1872.6 72.6 1871.6 71.0C1870.6 69.5 1867.6 68.8 1863.8 68.4C1860.0 68.0 1851.2 68.8 1848.7 68.6C1846.1 68.5 1846.9 68.1 1848.7 67.6z"/><path d="M1857.3 72.9C1859.3 70.6 1860.6 71.4 1859.5 74.5C1858.4 77.6 1853.9 87.4 1850.8 91.8C1847.7 96.2 1841.5 101.5 1840.9 100.9C1840.3 100.3 1844.6 93.0 1847.4 88.3C1850.1 83.7 1855.3 75.2 1857.3 72.9z"/><path d="M1911.0 57.6C1911.2 57.1 1903.7 55.7 1900.1 55.5C1896.6 55.3 1892.5 55.3 1889.8 56.3C1887.0 57.3 1884.1 59.5 1883.7 61.5C1883.3 63.5 1884.7 65.6 1887.2 68.4C1889.6 71.3 1896.2 75.9 1898.4 78.8C1900.6 81.7 1900.9 84.2 1900.1 85.7C1899.4 87.3 1898.6 87.5 1894.1 88.3C1889.6 89.1 1875.5 89.7 1873.3 90.5C1871.2 91.3 1876.9 92.7 1881.1 93.1C1885.3 93.5 1894.2 93.6 1898.4 92.7C1902.6 91.7 1905.3 89.6 1906.2 87.5C1907.1 85.3 1905.8 82.9 1903.6 79.7C1901.4 76.5 1895.4 71.3 1893.2 68.4C1891.1 65.6 1889.8 64.0 1890.6 62.4C1891.5 60.8 1895.0 59.7 1898.4 58.9C1901.8 58.1 1910.7 58.2 1911.0 57.6z"/></g>
</svg>
<div class="abs" style="left:0;top:53px;width:73px;text-align:center;font-size:11px;line-height:13px;color:#1c1c66;letter-spacing:-0.35px">SolidWorks<br>Office</div>
<div id="cmdline" class="abs"></div>
<div class="tab" style="left:0px;width:66px">Features</div>
<div class="tab" style="left:66px;width:55px">Skizze</div>
<div class="tab" style="left:121px;width:75px">Evaluieren</div>
<div class="tab" style="left:196px;width:67px">DimXpert</div>
<div id="tabact">Office Produkte</div>
<div id="panel" class="abs"></div><div id="panelhead" class="abs"></div><div class="abs" style="left:0;top:125px;width:186px;height:1px;background:#9fa3ba"></div><div class="abs" style="left:0;top:126px;width:186px;height:1px;background:#e8eaf3"></div>
<div class="abs" style="left:0;top:153px;width:186px;height:1px;background:#8f93aa"></div>
<div class="ptab" style="left:0;top:130px;height:25px;width:28px;background:#e3e5ef;border-color:#b8bbcc"></div>
<div class="ptab" style="left:29px"></div>
<div class="ptab" style="left:57px"></div>
<div class="ptab" style="left:85px"></div>
<div class="abs" style="left:0;top:154px;width:186px;height:18px;background:#e3e5ef"></div>
<div id="filter" class="abs"></div>
<div class="abs" style="left:172px;top:133px;font-size:14px;color:#4a4e66;font-family:'Liberation Sans',sans-serif">»</div>
<div class="tr" style="left:23px;top:178px;width:163px;overflow:hidden"><span id="rootname" style="letter-spacing:0.27px">Prothesenschaft_fein_test</span><span style="letter-spacing:-0.25px">&nbsp; (Standard)</span></div>
<div class="tr" style="top:196px;letter-spacing:0.45px">Beschriftungen</div>
<div class="tr" style="top:214px;letter-spacing:0.48px">Material &lt;nicht festgelegt&gt;</div>
<div class="tr" style="top:232px;letter-spacing:0.27px">Ebene vorne</div>
<div class="tr" style="top:250px;letter-spacing:0.22px">Ebene oben</div>
<div class="tr" style="top:268px;letter-spacing:0.17px">Ebene rechts</div>
<div class="tr" style="top:286px;letter-spacing:0.43px">Ursprung</div>
<div class="tr" style="top:304px;letter-spacing:0.49px">Importiert1</div>
<svg class="abs" style="left:0;top:122px" width="190" height="210" viewBox="0 122 190 210">
<defs><linearGradient id="gfun" x1="0" y1="0" x2="1" y2="0"><stop offset="0" stop-color="#1c6cf0"/><stop offset="0.5" stop-color="#9fe0ff"/><stop offset="1" stop-color="#1c6cf0"/></linearGradient>
<radialGradient id="gred" cx="0.35" cy="0.3" r="0.8"><stop offset="0" stop-color="#ffd0d0"/><stop offset="0.5" stop-color="#e81818"/><stop offset="1" stop-color="#900"/></radialGradient>
<radialGradient id="gblu" cx="0.35" cy="0.3" r="0.8"><stop offset="0" stop-color="#d0d8ff"/><stop offset="0.5" stop-color="#2030e0"/><stop offset="1" stop-color="#001090"/></radialGradient>
<radialGradient id="ggrn" cx="0.35" cy="0.3" r="0.8"><stop offset="0" stop-color="#d8ffd8"/><stop offset="0.5" stop-color="#18c018"/><stop offset="1" stop-color="#006a00"/></radialGradient>
<linearGradient id="gfa" x1="0" y1="0" x2="0" y2="1"><stop offset="0" stop-color="#fff2a0"/><stop offset="1" stop-color="#f5b91a"/></linearGradient>
</defs>
<g transform="translate(5 134) scale(1.0)" stroke-linejoin="round">
<path d="M0.3 3.6 L2.5 2 L6.25 4.5 L6.25 1.4 L8.4 0.1 L11.9 2.3 L11.9 6.7 L15.6 9.2 L15.6 13.25 L10.3 15.75 L0.3 5.4z" fill="#f2c200" stroke="#161000" stroke-width="1.25"/>
<path d="M0.3 3.6 L2.5 2 L6.25 4.5 L8.4 6.1 L11.9 6.7 L15.6 9.2 L10.3 12.6z" fill="#ffdc1c"/>
<path d="M10.3 12.6 L15.6 9.2 L15.6 13.25 L10.3 15.75z" fill="#d09c00"/>
<path d="M6.25 1.4 L8.4 0.1 L11.9 2.3 L8.4 2.9z" fill="#ffe240"/>
<path d="M8.4 2.9 L11.9 2.3 L11.9 6.7 L8.4 6.1z" fill="#c89400"/>
<path d="M6.25 1.4 L8.4 2.9 L8.4 6.1 L6.25 4.5z" fill="#eab800"/>
<path d="M0.3 3.6 L10.3 12.6 L15.6 9.2 M10.3 12.6 L10.3 15.6 M6.25 4.5 L8.4 6.1 L11.9 6.7 M8.4 6.1 L8.4 2.9 L6.25 1.4 M8.4 2.9 L11.9 2.3" stroke="#161000" stroke-width="0.9" fill="none"/>
<path d="M1.6 3.6 L9.8 11" stroke="#fff6b0" stroke-width="0.8"/>
</g>
<rect x="33.6" y="137.6" width="10.6" height="12.4" fill="#eaf3ff" stroke="#111" stroke-width="1.2"/><path d="M35.5 142.5h7M35.5 144.5h7M35.5 146.5h7M35.5 148.3h7" stroke="#7fbaf5" stroke-width="0.9"/><path d="M36.5 140.2l5.4-5.4 5.6-0.6 1.2 1.2-0.2 3-4.6 1.4-2.2 0.2-3.6 1.8z" fill="#e9b87c" stroke="#8a5a24" stroke-width="0.8"/><path d="M37 140l4.6-4.6" stroke="#7a4a1c" stroke-width="1.6"/>
<path d="M62.6 133v17" stroke="#8c8c8c" stroke-width="2.2"/><path d="M62.6 133v17" stroke="#e8e8e8" stroke-width="0.7"/><path d="M63 137.8h5M63 147h8" stroke="#7a7a7a" stroke-width="1.6"/><rect x="67.4" y="135" width="5.6" height="5.6" rx="1.3" fill="#f7d000" stroke="#111" stroke-width="1.1"/><rect x="70.6" y="144.3" width="5.6" height="5.6" rx="1.3" fill="#f7d000" stroke="#111" stroke-width="1.1"/>
<g stroke="#d050e0" stroke-width="1.5" fill="none"><circle cx="97" cy="142" r="5.4"/><path d="M89 142h16M97 134v16"/></g>
<path d="M9.3 158.6h10.6v1.2l-3.6 4v4.6h-3.2v-4.6l-3.8-4z" fill="url(#gfun)" stroke="#000a8c" stroke-width="0.9"/>
<g transform="translate(2.2 176.2) scale(1.0)" stroke-linejoin="round">
<path d="M0.3 3.6 L2.5 2 L6.25 4.5 L6.25 1.4 L8.4 0.1 L11.9 2.3 L11.9 6.7 L15.6 9.2 L15.6 13.25 L10.3 15.75 L0.3 5.4z" fill="#f2c200" stroke="#161000" stroke-width="1.25"/>
<path d="M0.3 3.6 L2.5 2 L6.25 4.5 L8.4 6.1 L11.9 6.7 L15.6 9.2 L10.3 12.6z" fill="#ffdc1c"/>
<path d="M10.3 12.6 L15.6 9.2 L15.6 13.25 L10.3 15.75z" fill="#d09c00"/>
<path d="M6.25 1.4 L8.4 0.1 L11.9 2.3 L8.4 2.9z" fill="#ffe240"/>
<path d="M8.4 2.9 L11.9 2.3 L11.9 6.7 L8.4 6.1z" fill="#c89400"/>
<path d="M6.25 1.4 L8.4 2.9 L8.4 6.1 L6.25 4.5z" fill="#eab800"/>
<path d="M0.3 3.6 L10.3 12.6 L15.6 9.2 M10.3 12.6 L10.3 15.6 M6.25 4.5 L8.4 6.1 L11.9 6.7 M8.4 6.1 L8.4 2.9 L6.25 1.4 M8.4 2.9 L11.9 2.3" stroke="#161000" stroke-width="0.9" fill="none"/>
<path d="M1.6 3.6 L9.8 11" stroke="#fff6b0" stroke-width="0.8"/>
</g>
<g stroke="#808088" stroke-width="1" stroke-dasharray="1 1"><path d="M10.5 193v118.5"/><path d="M11 203.5h10"/><path d="M11 221.5h10"/><path d="M11 239.5h10"/><path d="M11 257.5h10"/><path d="M11 275.5h10"/><path d="M11 293.5h12"/><path d="M11 311.5h10"/></g>
<path d="M21.6 196.4v-1.4l1-1h4.2l1 1.4h8.6v13h-14.8z" fill="url(#gfa)" stroke="#c88a10" stroke-width="0.9"/><path d="M22 197.4h14" stroke="#fff8c8" stroke-width="0.8"/><text x="25.2" y="207" font-family="Liberation Serif,serif" font-weight="bold" font-size="11.5" fill="#1c2ad0">A</text>
<circle cx="23.6" cy="214.3" r="2.5" fill="url(#gred)"/><path d="M28.2 214.3h8" stroke="#1a1a1a" stroke-width="1.9"/>
<circle cx="23.6" cy="219.3" r="2.5" fill="url(#gblu)"/><path d="M28.2 219.3h8" stroke="#1a1a1a" stroke-width="1.9"/>
<circle cx="23.6" cy="224.3" r="2.5" fill="url(#ggrn)"/><path d="M28.2 224.3h8" stroke="#1a1a1a" stroke-width="1.9"/>
<g stroke="#111" stroke-width="1.05" fill="none"><path d="M28.5 230.20000000000002L35.7 237.4L28.5 244.6L21.3 237.4z"/><path d="M21.3 230.4l2.8 2.7M33.1 242.20000000000002l2.8 2.6M25.7 235.0l5.4 5"/></g>
<g stroke="#111" stroke-width="1.05" fill="none"><path d="M28.5 248.20000000000002L35.7 255.4L28.5 262.6L21.3 255.4z"/><path d="M21.3 248.4l2.8 2.7M33.1 260.2l2.8 2.6M25.7 253.0l5.4 5"/></g>
<g stroke="#111" stroke-width="1.05" fill="none"><path d="M28.5 266.2L35.7 273.4L28.5 280.59999999999997L21.3 273.4z"/><path d="M21.3 266.4l2.8 2.7M33.1 278.2l2.8 2.6M25.7 271.0l5.4 5"/></g>
<path d="M26.5 295.5V286" stroke="#b01010" stroke-width="1.2"/><path d="M24 287.2l2.5-3.4 2.5 3.4z" fill="#b01010"/><path d="M26.5 295.4H32" stroke="#b01010" stroke-width="1.2"/><path d="M31 293l3.8 2.4-3.8 2.4z" fill="#b01010"/><path d="M24 295.6h5M26.5 293.2v5M24.7 293.8l3.6 3.6M28.3 293.8l-3.6 3.6" stroke="#111" stroke-width="0.8"/>
<path d="M21.6 304.4l2-1.8h11.4l1.6 1.8v12.8h-12.4l-2.6-1.8z" fill="#e8b400" stroke="#1a1400" stroke-width="1.1" stroke-linejoin="round"/><rect x="24.2" y="304.6" width="12.2" height="12.6" rx="1" fill="#fbd91c" stroke="#1a1400" stroke-width="1.1"/><circle cx="30.4" cy="311" r="3.6" fill="#a87800" stroke="#3a2800" stroke-width="0.8"/><circle cx="30" cy="310.6" r="1.8" fill="#f0c030"/>
</svg>
<div id="blue" class="abs"></div>
<div id="hscroll" class="abs"></div><div id="thumb" class="abs"></div>
<svg class="abs" style="left:0;top:985px" width="186" height="18" viewBox="0 985 186 18">
<path d="M9 990.4v7.4l-4.2-3.7z" fill="#3a3a3a"/><path d="M179 990.4v7.4l4.2-3.7z" fill="#3a3a3a"/>
<path d="M50.8 991.4v6.4M53.8 991.4v6.4M56.8 991.4v6.4" stroke="#555" stroke-width="1.2"/>
</svg>
<div id="pvline" class="abs"></div>
<svg class="abs" style="left:186px;top:538px" width="12" height="32" viewBox="186 538 12 32">
<path d="M186 540.3h8.6q0.9 0 0.9 1v25q0 1-0.9 1h-8.6z" fill="#e3e5ef"/>
<path d="M194 544.2v4.8l-3.2-2.4zM194 552.1v4.8l-3.2-2.4zM194 560.1v4.8l-3.2-2.4z" fill="#5a5ac0"/>
</svg>
<div class="rt" style="top:164px;height:22px;background:#e1e3ee"></div>
<div class="rt" style="top:188px;height:22px"></div>
<div class="rt" style="top:212px;height:22px"></div>
<div class="rt" style="top:236px;height:22px"></div>
<div class="rt" style="top:260px;height:22px"></div>
<div class="rt" style="top:284px;height:22px"></div>
<div class="rt" style="top:308px;height:22px"></div>
<svg class="abs" style="left:1896px;top:160px" width="24" height="175" viewBox="1896 160 24 175">
<defs><linearGradient id="gfold2" x1="0" y1="0" x2="0" y2="1"><stop offset="0" stop-color="#fff3a8"/><stop offset="1" stop-color="#f0c040"/></linearGradient></defs>
<path d="M1900.6 175.6l8-7.4 8 7.4" fill="none" stroke="#c88a00" stroke-width="1.8"/><path d="M1902.6 175v7.4h12v-7.4l-6-5.4z" fill="#fff0a0" stroke="#c08400" stroke-width="0.9"/><rect x="1907.2" y="176.6" width="3" height="5.6" fill="#e0a000" stroke="#8a5a00" stroke-width="0.6"/><rect x="1913.4" y="168.4" width="1.8" height="4" fill="#d04020"/>
<rect x="1901.4" y="200" width="4.4" height="6" fill="#28b030" stroke="#0a5a10" stroke-width="0.8"/><rect x="1906" y="197" width="4.4" height="9" fill="#f6cf20" stroke="#8a6a00" stroke-width="0.8"/><rect x="1910.8" y="193.4" width="4.2" height="12.6" fill="#3a7ae8" stroke="#103a90" stroke-width="0.8"/><path d="M1902 198.4l11.4-6.4" stroke="#222" stroke-width="1.2"/><path d="M1903.4 197.6l8.8-5" stroke="#e8e8e8" stroke-width="0.6"/>
<path d="M1901.6 228.6v-9.6h4l1.4 1.4h6.4v2" fill="#f4d060" stroke="#c08a10" stroke-width="0.9"/><path d="M1901.6 228.6l2.8-6.2h11.8l-3 6.2z" fill="url(#gfold2)" stroke="#c08a10" stroke-width="0.9"/>
<path d="M1901.6 242.8l6-2.8 6.4 2.4v7.6l-6.4 3-6-2.6z" fill="#d01818"/><path d="M1901.6 242.8l6-2.8 6.4 2.4-6.4 2.8z" fill="#ee4a40"/><path d="M1907.6 245.2l6.4-2.8v7.6l-6.4 3z" fill="#a01010"/><text x="1902.4" y="250.6" font-family="Liberation Sans,sans-serif" font-weight="bold" font-size="7" fill="#fff">S</text><text x="1908" y="250.4" font-family="Liberation Sans,sans-serif" font-weight="bold" font-size="6.4" fill="#f0f0f0">W</text><circle cx="1910.6" cy="248.4" r="2.8" fill="#e8f0fc" fill-opacity="0.75" stroke="#7a8090" stroke-width="0.9"/><path d="M1912.8 250.6l3 3" stroke="#2f6fd0" stroke-width="1.8" stroke-linecap="round"/>
<rect x="1901.6" y="263.6" width="13.6" height="9.6" fill="#eef2fb" stroke="#5a70a8" stroke-width="0.9"/><path d="M1908.4 263.6v9.6M1901.6 268h13.6" stroke="#5a70a8" stroke-width="0.8"/><path d="M1903 265.8h4M1910 265.8h3.6M1903.4 270.8h3.4" stroke="#f2c820" stroke-width="1.6"/><rect x="1910" y="269.4" width="4.2" height="2.4" fill="#2a50c0"/><path d="M1900.8 276.8h4.6" stroke="#1010c8" stroke-width="1.6"/><path d="M1904.6 274.4l3 2.4-3 2.4z" fill="#1010c8"/>
<defs><clipPath id="cb3"><circle cx="1908.8" cy="294.6" r="6.8"/></clipPath></defs><g clip-path="url(#cb3)"><rect x="1901" y="287" width="7.8" height="7.6" fill="#2a62e0"/><rect x="1908.8" y="287" width="8" height="7.6" fill="#e02820"/><rect x="1901" y="294.6" width="7.8" height="8" fill="#22a828"/><rect x="1908.8" y="294.6" width="8" height="8" fill="#f2c21c"/><circle cx="1908.8" cy="294.6" r="6.8" fill="url(#gshade)"/></g>
<rect x="1902.4" y="315.4" width="11" height="11" fill="#f0f0ec" stroke="#6a6a6a" stroke-width="0.9"/><path d="M1904.4 319h7M1904.4 321.2h7M1904.4 323.4h7" stroke="#a8a8a8" stroke-width="0.8"/><path d="M1905 316.2l4.4-4.2 5.6-0.4 1 1-0.2 2.6-3.6 1.2-3.6 0.2z" fill="#e9b87c" stroke="#8a5a24" stroke-width="0.8"/><path d="M1905.4 316l3.8-3.6" stroke="#7a4a1c" stroke-width="1.5"/>
</svg>
<div id="vbottom" class="abs"></div><div id="btabs" class="abs"></div><div class="abs" style="left:1918px;top:1006px;width:2px;height:15px;background:#5c5f70"></div><div class="abs" style="left:0;top:1021px;width:1920px;height:1px;background:#8a8da1"></div>
<div class="abs" style="left:0;top:1007px;width:2px;height:14px;background:#9ab8b0"></div>
<div class="abs" style="left:2px;top:1007px;width:15px;height:14px;background:#a9abc3;border:1px solid #8f92ab;border-top-color:#6f7288"></div>
<div class="abs" style="left:18px;top:1007px;width:15px;height:14px;background:#a9abc3;border:1px solid #8f92ab;border-top-color:#6f7288"></div>
<div class="abs" style="left:34px;top:1007px;width:15px;height:14px;background:#a9abc3;border:1px solid #8f92ab;border-top-color:#6f7288"></div>
<div class="abs" style="left:50px;top:1007px;width:15px;height:14px;background:#a9abc3;border:1px solid #8f92ab;border-top-color:#6f7288"></div>
<svg class="abs" style="left:0;top:1007px" width="70" height="14" viewBox="0 1007 70 14">
<g fill="#8b8ea6"><path d="M12.6 1010v8l-5.4-4z"/><rect x="5.6" y="1010" width="1.5" height="8"/>
<path d="M28 1010v8l-5.6-4z"/><path d="M39.6 1010v8l5.6-4z"/>
<path d="M54 1010v8l5.4-4z"/><rect x="59.6" y="1010" width="1.5" height="8"/></g></svg>
<div class="abs" style="left:66px;top:1007px;width:2px;height:14px;background:#f4f5fa"></div>
<div class="abs" style="left:68px;top:1006px;width:59px;height:15px;background:linear-gradient(#eceef5,#d3d6e4);border:1px solid #8e91a8;border-top:none;font-family:'Liberation Sans',sans-serif;font-weight:bold;font-size:12px;line-height:14px;color:#111;text-align:center">Modell</div>
<div class="abs" style="left:127px;top:1006px;width:131px;height:15px;background:#bfc2d6;border:1px solid #5c5f72;font-family:'Liberation Sans',sans-serif;font-size:12px;line-height:13px;color:#1a1a22;text-align:left;padding-left:6.5px;letter-spacing:0.25px">Bewegungsstudie 1</div>
<div id="status" class="abs"><span class="t" style="left:2px">SolidWorks Professional 2010 x64 Edition</span><span class="t" style="left:1716px">Bearbeiten Teil</span></div>
<svg class="abs" style="left:1690px;top:1021px" width="230" height="19" viewBox="1690 1021 230 19">
<path d="M1703.5 1023v17M1711.5 1023v17M1799.5 1023v17M1807.5 1023v17M1815.5 1023v17" stroke="#e2e4ef" stroke-width="1"/>
<rect x="1827.6" y="1024.6" width="11.8" height="11.8" fill="#eef6ff" stroke="#2a5ab8" stroke-width="1"/>
<text x="1830.2" y="1035" font-family="Liberation Sans,sans-serif" font-weight="bold" font-size="11.5" fill="#18a818">?</text>
<g transform="rotate(-38 1898.5 1031) translate(1898.5 1031) scale(0.86) translate(-1898.5 -1031)"><rect x="1890.5" y="1026.4" width="15.4" height="9" rx="2.6" fill="#f0c020" stroke="#b07a00" stroke-width="1"/><circle cx="1902.6" cy="1030.9" r="1.5" fill="#fff" stroke="#8a5a00" stroke-width="0.6"/><path d="M1893 1028.4v5M1895.2 1028.4v5M1897.4 1028.4v5M1899.4 1028.4v5" stroke="#b07a00" stroke-width="0.7"/></g>
</svg>
</body></html>
